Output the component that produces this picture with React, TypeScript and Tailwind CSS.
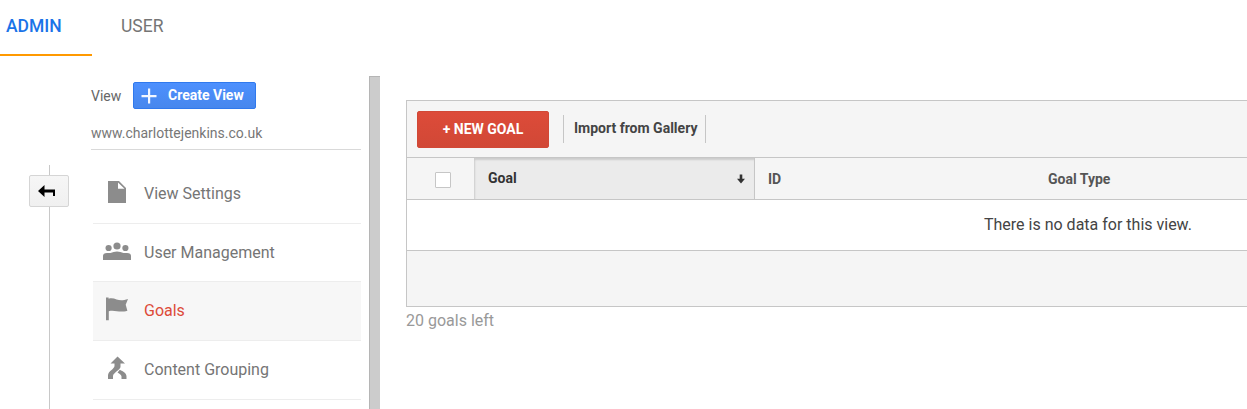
import type { ReactNode } from "react"

const menuItems: { icon: ReactNode; text: string; height: string; active?: boolean }[] = [
  {
    // page with folded corner
    icon: (
      <svg width="30" height="26" viewBox="0 0 30 26" fill="#8c8c8c">
        <path fillRule="evenodd" d="M6 2h11l7 7v15H6zM16 3.5v6.3h6.5z" />
      </svg>
    ),
    text: "View Settings",
    height: "h-[59px]",
  },
  {
    icon: (
      <svg width="30" height="26" viewBox="0 0 30 26" fill="#8c8c8c">
        <circle cx="15" cy="8" r="3.6" />
        <circle cx="6.6" cy="10" r="3.1" />
        <circle cx="23.4" cy="10" r="3.1" />
        <path d="M1 22v-4q0-3 4-3h3.500q3-1.500 6.500-1.500t6.500 1.500H25q4 0 4 3v4z" />
      </svg>
    ),
    text: "User Management",
    height: "h-[58px]",
  },
  {
    icon: (
      <svg width="30" height="26" viewBox="0 0 30 26" fill="#8c8c8c">
        <path d="M4 1.500h2.600v1.200c3-.8 5.400-.2 8 .8 3.500 1.300 7 1 11.400-.5l-2.300 5.800 1.700 6c-4.500 1.200-7.500.8-10.500.4-3-.4-5.500-.8-8.100.1v9H4z" />
      </svg>
    ),
    text: "Goals",
    height: "h-[59px]",
    active: true,
  },
  {
    icon: (
      <svg width="30" height="26" viewBox="0 0 30 26" fill="#8c8c8c">
        <path d="M15.500 1.500l7.500 7h-4.500v3.200c0 3-7.500 6-7.500 9.300v3H6v-3.500c0-4.500 6.500-6.500 6.500-9.500V8.500H8.500z" />
        <path d="M17.800 14.800c3.500 1.700 6.700 3.400 6.700 6.700V24h-5v-2.500c0-1.500-1.800-2.700-4-4z" />
      </svg>
    ),
    text: "Content Grouping",
    height: "h-[59px]",
  },
]

function Tabs() {
  return (
    <div className="flex h-14">
      <div className="h-14 w-[92px] border-b-2 border-[#f90] pl-[6px] text-[17.5px] leading-[52px] font-medium text-[#1a73e8]">
        <span>ADMIN</span>
      </div>
      <div className="pl-[29px] text-[17.5px] leading-[52px] text-[#757575]">
        <span>USER</span>
      </div>
    </div>
  )
}

function Rail() {
  return (
    <div className="flex w-[91px] shrink-0 flex-col pt-[89px]">
      <div className="ml-[49px] h-[10px] w-px bg-[#c8c8c8]" />
      <button className="ml-[29px] flex h-8 w-10 items-center justify-center rounded-[2px] border border-[#d5d5d5] bg-gradient-to-b from-[#f6f6f6] to-[#f0f0f0]">
        <svg width="20" height="14" viewBox="0 0 20 14" className="-ml-1" fill="#000">
          <path d="M1 7l6.500-6v4.500H18V12h-2V8.500H7.500V13z" />
        </svg>
      </button>
      <div className="ml-[49px] w-px flex-1 bg-[#c8c8c8]" />
    </div>
  )
}

function Sidebar() {
  return (
    <div className="w-[270px] shrink-0">
      <div className="flex h-[39px] pt-[6px]">
        <span className="w-[42px] text-[14px] leading-7 text-[#666]">View</span>
        <button className="flex h-[27px] w-[123px] items-center rounded-[2px] border border-[#3079ed] bg-gradient-to-b from-[#4d90fe] to-[#4787ed] pl-[7px] text-[14px] font-bold text-white">
          <svg width="16" height="16" viewBox="0 0 16 16" fill="#f3f7ff">
            <path d="M7 .5h2.200V7h6.300v2.200H9.200v6.300H7V9.200H.5V7H7z" />
          </svg>
          <span className="ml-[11px]">Create View</span>
        </button>
      </div>
      <div className="h-[35px] border-b border-[#d9d9d9] text-[14px] leading-9 text-[#777]">
        <span>www.charlottejenkins.co.uk</span>
      </div>
      <ul className="ml-[2px] pt-[15px]">
        {menuItems.map((item) => (
          <li
            key={item.text}
            className={`flex items-center border-b border-[#ededed] ${item.height} ${
              item.active ? "bg-[#f7f7f7] text-[#dd4b39]" : "text-[#757575]"
            }`}
          >
            <div className="-mt-1 ml-[9px] w-[42px]">{item.icon}</div>
            <span className="text-[16px]">{item.text}</span>
          </li>
        ))}
      </ul>
    </div>
  )
}

function GoalsTable() {
  return (
    <div className="min-w-0 flex-1 pt-6 pl-[26px]">
      <div className="border-y border-l border-[#c6c6c6] bg-[#f5f5f5]">
        <div className="flex h-14 pt-[10px] pl-[10px]">
          <button className="h-[37px] w-[132px] rounded-[2px] border border-[#d14836] bg-gradient-to-b from-[#dd4b39] to-[#d14836] text-[14px] font-bold text-white">
            <span>+ NEW GOAL</span>
          </button>
          <div className="mt-1 ml-[14px] h-7 w-[143px] border-x border-[#c6c6c6] pl-[10px] text-[14px] leading-[27px] font-bold whitespace-nowrap text-[#444]">
            <span>Import from Gallery</span>
          </div>
        </div>
        <div className="flex h-[43px] border-y border-[#c6c6c6] text-[14px] leading-[43px] font-bold text-[#555]">
          <div className="flex w-[67px] items-center pt-[3px] pl-7">
            <div className="size-4 rounded-[1px] border border-[#c6c6c6] bg-white" />
          </div>
          <div className="flex w-[281px] items-center justify-between border-r border-[#c6c6c6] bg-[#ebebeb] pr-[9px] pl-[14px] text-[#333] shadow-[inset_1px_2px_2px_#ccc]">
            <span>Goal</span>
            <svg width="8" height="10" viewBox="0 0 8 10" fill="#333">
              <path d="M2.700.5h2.600v4.300H8L4 9.500 0 4.800h2.700z" />
            </svg>
          </div>
          <div className="w-[280px] pl-[13px]">
            <span>ID</span>
          </div>
          <div className="pl-[13px]">
            <span>Goal Type</span>
          </div>
        </div>
        <div className="h-[50px] bg-white pl-[577px] text-[16px] leading-[49px] whitespace-nowrap text-[#444]">
          <span>There is no data for this view.</span>
        </div>
        <div className="h-14 border-t border-[#c6c6c6]" />
      </div>
      <div className="text-[16px] leading-[27px] text-[#999]">
        <span>20 goals left</span>
      </div>
    </div>
  )
}

export default function App() {
  return (
    <div className="flex h-[409px] w-[1247px] flex-col overflow-hidden bg-white font-[Roboto,sans-serif]">
      <Tabs />
      <div className="flex min-h-0 flex-1 pt-5">
        <Rail />
        <Sidebar />
        <div className="ml-2 w-[11px] shrink-0 border-t border-l border-[#b5b5b5] bg-[#ccc]" />
        <GoalsTable />
      </div>
    </div>
  )
}
